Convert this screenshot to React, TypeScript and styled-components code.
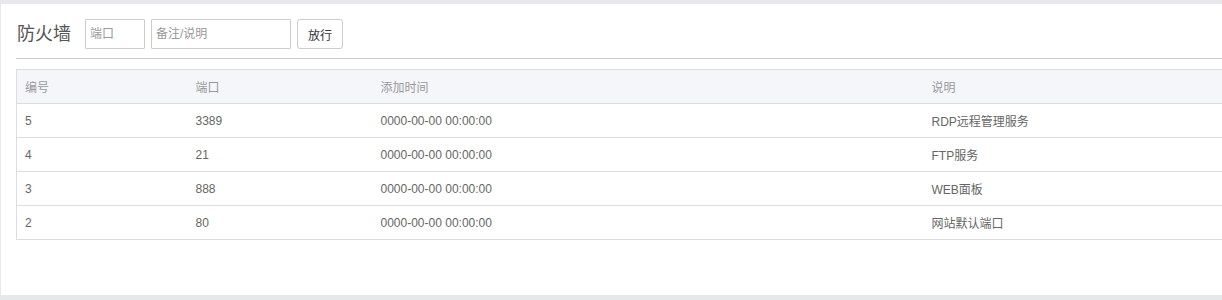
import styled, { createGlobalStyle } from "styled-components";

const GlobalStyle = createGlobalStyle`
    html, body{
        margin:0;
        padding:0;
        background:#e7e8ec;
        overflow:hidden;
    }
    body{
        font-family:"Liberation Sans", "Noto Sans CJK SC", sans-serif;
        font-size:12px;
        color:#666;
    }
`;

const rows = [
    { id: 5, port: "3389", time: "0000-00-00 00:00:00", note: "RDP远程管理服务" },
    { id: 4, port: "21", time: "0000-00-00 00:00:00", note: "FTP服务" },
    { id: 3, port: "888", time: "0000-00-00 00:00:00", note: "WEB面板" },
    { id: 2, port: "80", time: "0000-00-00 00:00:00", note: "网站默认端口" },
];

export default function App(){
    return(
        <Page>
            <GlobalStyle />
            <Panel>
                <Toolbar>
                    <Title>防火墙</Title>
                    <Field $width={60} placeholder="端口" />
                    <Field $width={140} placeholder="备注/说明" />
                    <Button type="button">放行</Button>
                </Toolbar>

                <Table>
                    <colgroup>
                        <col style={{ width: 171 }} />
                        <col style={{ width: 185 }} />
                        <col style={{ width: 551 }} />
                        <col />
                    </colgroup>
                    <thead>
                        <tr>
                            <th>编号</th>
                            <th>端口</th>
                            <th>添加时间</th>
                            <th>说明</th>
                        </tr>
                    </thead>
                    <tbody>
                        {rows.map(row => (
                            <tr key={row.id}>
                                <td>{row.id}</td>
                                <td>{row.port}</td>
                                <td>{row.time}</td>
                                <td>{row.note}</td>
                            </tr>
                        ))}
                    </tbody>
                </Table>
            </Panel>
        </Page>
    );
}

const Page = styled.div`
    width:1222px;
    height:300px;
    padding-top:4px;
    box-sizing:border-box;
    overflow:hidden;
`;

const Panel = styled.div`
    width:1260px;
    height:291px;
    margin-left:1px;
    background:#fff;
    padding:0 0 0 15px;
    box-sizing:border-box;
`;

const Toolbar = styled.div`
    display:flex;
    align-items:center;
    gap:6px;
    height:55px;
    padding-top:6px;
    box-sizing:border-box;
    border-bottom:1px solid #ccc;
    margin-bottom:10px;
`;

const Title = styled.h2`
    margin:0 8px 0 1px;
    font-size:18px;
    font-weight:400;
    color:#555;
    line-height:30px;
`;

const Field = styled.input<{ $width: number }>`
    width:${p => p.$width}px;
    height:30px;
    box-sizing:border-box;
    border:1px solid #ccc;
    border-radius:1px;
    padding:0 4px;
    font-family:inherit;
    font-size:12px;
    color:#555;
    outline:none;
    &::placeholder{
        color:#999;
    }
`;

const Button = styled.button`
    height:30px;
    width:46px;
    box-sizing:border-box;
    background:#fff;
    border:1px solid #ccc;
    border-radius:3px;
    font-family:inherit;
    font-size:12px;
    color:#333;
    padding:0;
`;

const Table = styled.table`
    width:1230px;
    table-layout:fixed;
    border-collapse:collapse;
    border:1px solid #ddd;
    th, td{
        height:34px;
        padding:0 8px;
        text-align:left;
        font-size:12px;
        font-weight:400;
        box-sizing:border-box;
        border-top:1px solid #ddd;
    }
    th{
        background:#f5f6fa;
        color:#999;
    }
    td{
        color:#666;
    }
`;
